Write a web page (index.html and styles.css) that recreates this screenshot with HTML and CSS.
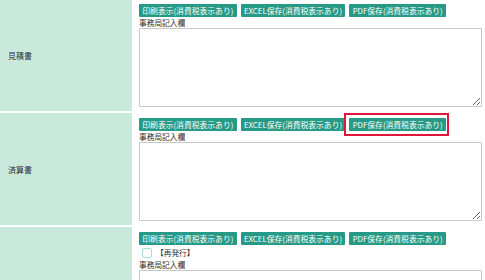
FILE: index.html
```html
<!DOCTYPE html>
<html lang="ja">
<head>
<meta charset="utf-8">
<link rel="stylesheet" href="styles.css">
</head>
<body>
<div class="table">
  <div class="row">
    <div class="head">見積書</div>
    <div class="cell">
      <div class="buttons">
        <span class="btn">印刷表示(消費税表示あり)</span>
        <span class="btn">EXCEL保存(消費税表示あり)</span>
        <span class="btn">PDF保存(消費税表示あり)</span>
      </div>
      <div class="label">事務局記入欄</div>
      <textarea class="memo"></textarea>
    </div>
  </div>
  <div class="row">
    <div class="head">済算書</div>
    <div class="cell">
      <div class="buttons">
        <span class="btn">印刷表示(消費税表示あり)</span>
        <span class="btn">EXCEL保存(消費税表示あり)</span>
        <span class="btn highlighted">PDF保存(消費税表示あり)</span>
      </div>
      <div class="label">事務局記入欄</div>
      <textarea class="memo"></textarea>
    </div>
  </div>
  <div class="row">
    <div class="head"></div>
    <div class="cell">
      <div class="buttons">
        <span class="btn">印刷表示(消費税表示あり)</span>
        <span class="btn">EXCEL保存(消費税表示あり)</span>
        <span class="btn">PDF保存(消費税表示あり)</span>
      </div>
      <label class="check"><span class="box"></span>【再発行】</label>
      <div class="label">事務局記入欄</div>
      <textarea class="memo"></textarea>
    </div>
  </div>
</div>
</body>
</html>
```

FILE: styles.css
```css
html, body {
  margin: 0;
  padding: 0;
  background: #fff;
  overflow: hidden;
}
body {
  font-family: "Noto Sans CJK JP", "Noto Sans", sans-serif;
  color: #333;
  font-size: 7.5px;
}
.table {
  margin-top: -1px;
}
.row {
  display: grid;
  grid-template-columns: 132px 1fr;
  column-gap: 3px;
  margin-bottom: 2px;
}
.head {
  background: #c9e9dc;
  display: flex;
  align-items: center;
  padding-left: 8px;
  font-size: 8px;
  color: #333;
}
.cell {
  padding: 5px 4px 4px 4px;
  display: flex;
  flex-direction: column;
}
.buttons {
  display: flex;
  gap: 4px;
}
.btn {
  position: relative;
  display: inline-flex;
  align-items: center;
  height: 13px;
  padding: 0 3.3px;
  background: #269a86;
  color: #fff;
  font-size: 7.8px;
  border-radius: 1px;
  line-height: 1;
  white-space: nowrap;
}
.btn.highlighted::after {
  content: "";
  position: absolute;
  left: -5px;
  top: -5px;
  right: -3px;
  bottom: -5px;
  border: 2px solid #e1163c;
}
.label {
  height: 11px;
  line-height: 11px;
  font-size: 7.7px;
  color: #333;
}
.memo {
  display: block;
  box-sizing: border-box;
  width: 343px;
  height: 79px;
  margin: 0;
  border: 1px solid #c8c8c8;
  border-radius: 1px;
  resize: both;
  background: #fff;
}
.check {
  display: flex;
  align-items: center;
  height: 13px;
  margin-top: 1px;
  font-size: 7.7px;
  color: #333;
}
.box {
  display: inline-block;
  box-sizing: border-box;
  width: 10px;
  height: 10px;
  margin: 0 4px 0 3px;
  border: 1px solid #a9dbe2;
  border-radius: 2px;
  background: #fff;
}
```
